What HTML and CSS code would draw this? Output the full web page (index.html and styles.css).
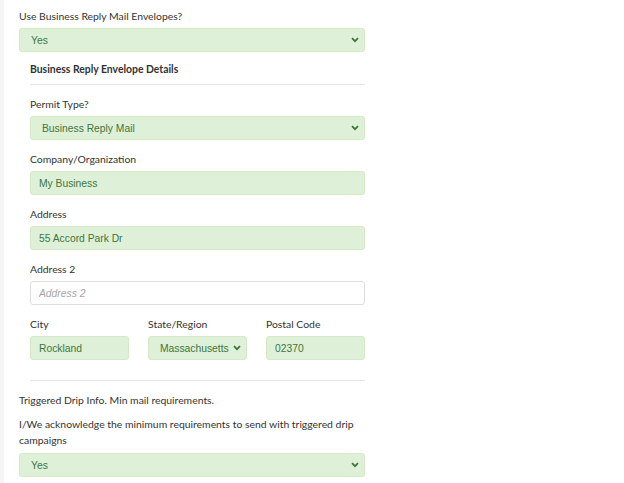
FILE: index.html
```html
<!DOCTYPE html>
<html lang="en">
<head>
  <meta charset="UTF-8" />
  <meta name="viewport" content="width=device-width, initial-scale=1.0"/>
  <title>Mailing Details</title>
  <link rel="stylesheet" href="styles.css">
</head>
<body>

  <form class="form">
    <div class="field lead">
      <label for="useBre">Use Business Reply Mail Envelopes?</label>
      <select id="useBre" class="control ok">
        <option>Yes</option>
        <option>No</option>
      </select>
    </div>

    <div class="sub">
      <div class="sub-title">Business Reply Envelope Details</div>
      <hr>

      <div class="field">
        <label for="permit">Permit Type?</label>
        <select id="permit" class="control ok">
          <option>Business Reply Mail</option>
        </select>
      </div>

      <div class="field">
        <label for="company">Company/Organization</label>
        <input id="company" class="control ok" value="My Business">
      </div>

      <div class="field">
        <label for="addr1">Address</label>
        <input id="addr1" class="control ok" value="55 Accord Park Dr">
      </div>

      <div class="field">
        <label for="addr2">Address 2</label>
        <input id="addr2" class="control" placeholder="Address 2">
      </div>

      <div class="row">
        <div class="field">
          <label for="city">City</label>
          <input id="city" class="control ok" value="Rockland">
        </div>
        <div class="field">
          <label for="state">State/Region</label>
          <select id="state" class="control ok">
            <option>Massachusetts</option>
          </select>
        </div>
        <div class="field">
          <label for="zip">Postal Code</label>
          <input id="zip" class="control ok" value="02370">
        </div>
      </div>
      <hr class="end">
    </div>

    <p class="note">Triggered Drip Info. Min mail requirements.</p>

    <div class="field">
      <label for="ack" class="wrap">I/We acknowledge the minimum requirements to send with triggered drip campaigns</label>
      <select id="ack" class="control ok">
        <option>Yes</option>
        <option>No</option>
      </select>
    </div>
  </form>

</body>
</html>
```

FILE: styles.css
```css
body {
  font-family: 'Lato', 'Noto Sans', sans-serif;
  font-size: 10.4px;
  color: #333;
  background: #fff;
  margin: 0;
  padding: 8px 0 0 15px;
  border-left: 4px solid #f5f5f5;
  min-height: 475px;
}

.form {
  width: 346px;
}

.field {
  margin-bottom: 11px;
}

.field.lead {
  margin-bottom: 9px;
}

label {
  display: block;
  line-height: 16px;
  margin-bottom: 4px;
}

label.wrap {
  margin-bottom: 5px;
}

.control {
  display: block;
  box-sizing: border-box;
  width: 100%;
  height: 24px;
  margin: 0;
  padding: 0 8px;
  font-family: 'Liberation Sans', Arial, sans-serif;
  font-size: 10.3px;
  color: #555;
  background: #fff;
  border: 1px solid #ddd;
  border-radius: 3px;
  outline: none;
}

.control::placeholder {
  color: #a5a5a5;
  font-style: italic;
}

select.control {
  appearance: none;
  padding-left: 11px;
  background-image: url("data:image/svg+xml,%3Csvg xmlns='http://www.w3.org/2000/svg' width='8' height='6' viewBox='0 0 8 6'%3E%3Cpath d='M1 1.2l3 3 3-3' fill='none' stroke='%233c763d' stroke-width='1.8'/%3E%3C/svg%3E");
  background-repeat: no-repeat;
  background-position: right 5px center;
}

.control.ok {
  background-color: #dff0d8;
  border-color: #d6e9c6;
  color: #3c763d;
}

.sub {
  padding-left: 11px;
}

.sub-title {
  font-weight: bold;
  line-height: 16px;
}

hr {
  border: 0;
  border-top: 1px solid #e5e5e5;
  margin: 7px 0 11px;
}

hr.end {
  margin: 20px 0 0;
}

.row {
  display: grid;
  grid-template-columns: repeat(3, 1fr);
  gap: 19px;
}

.row .field {
  margin-bottom: 0;
}

.note {
  margin: 11px 0 8px;
  line-height: 16px;
}
```
